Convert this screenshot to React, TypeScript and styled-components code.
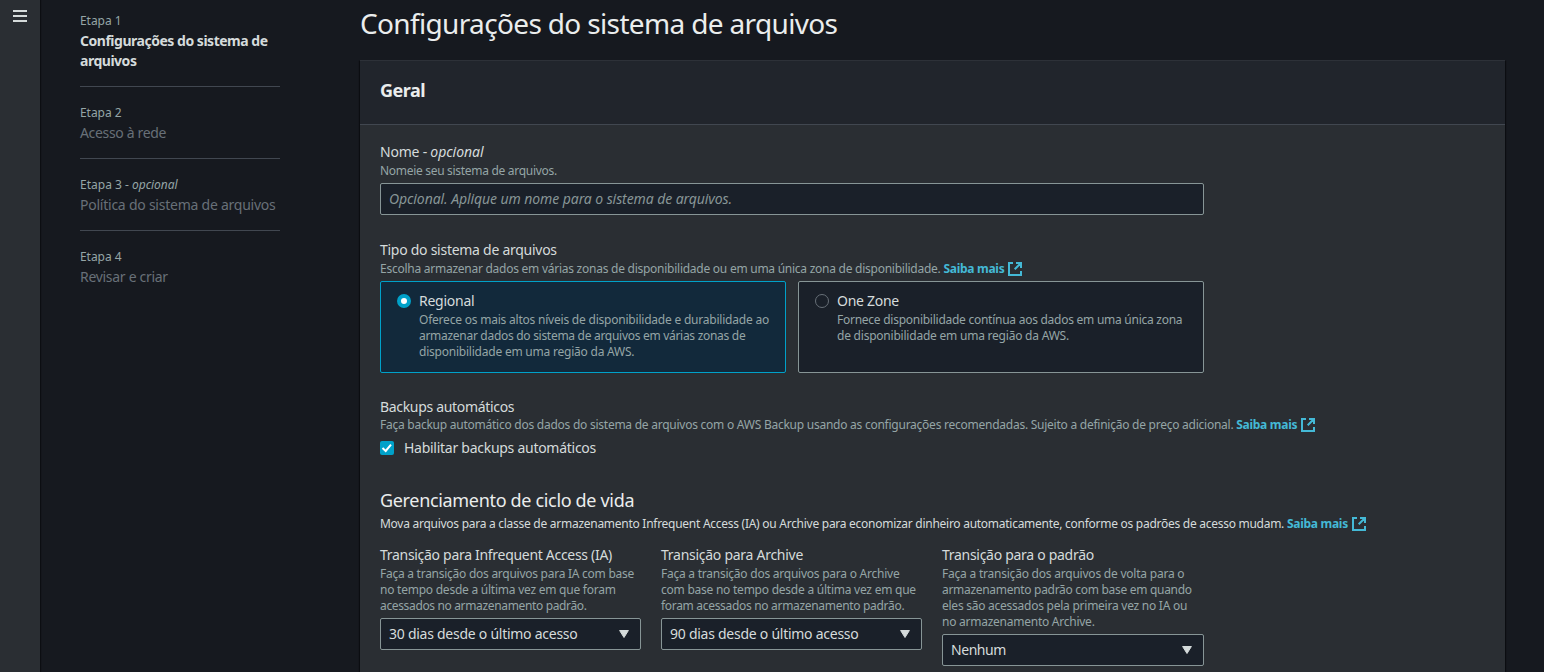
import React from 'react';
import styled, { createGlobalStyle } from 'styled-components';

const GlobalStyle = createGlobalStyle`
  * { box-sizing: border-box; }
  html, body, #root { height: 100%; }
  body {
    margin: 0;
    overflow: hidden;
    background: #16191f;
    color: #d5dbdb;
    font-family: 'Noto Sans', 'Open Sans', sans-serif;
    font-size: 14px;
    line-height: 20px;
  }
  h1, h2, h3, p, ol { margin: 0; padding: 0; }
`;

type Tracked = { $track?: number };

const Shell = styled.div`
  display: flex;
  height: 100vh;
  overflow: hidden;
`;

const NavRail = styled.nav`
  flex: none;
  width: 40px;
  padding: 10px 13px;
  background: #2a2e33;
  box-shadow: 1px 0 1px #0c0e12;
`;

const MenuButton = styled.button`
  display: flex;
  flex-direction: column;
  gap: 3px;
  width: 14px;
  padding: 0;
  border: 0;
  background: none;
`;

const MenuBar = styled.span`
  height: 2px;
  background: #d5dbdb;
`;

const Steps = styled.ol`
  flex: none;
  width: 200px;
  margin: 11px 0 0 40px;
  list-style: none;
`;

const Step = styled.li`
  padding-bottom: 15px;
  & + & {
    padding-top: 16px;
    border-top: 1px solid #414750;
  }
`;

const StepNumber = styled.div<Tracked>`
  font-size: 12px;
  color: #95a5a6;
  letter-spacing: ${(p) => p.$track ?? -0.05}px;
`;

const StepTitle = styled.div<{ $active?: boolean } & Tracked>`
  color: ${(p) => (p.$active ? '#d5dbdb' : '#687078')};
  font-weight: ${(p) => (p.$active ? 700 : 400)};
  letter-spacing: ${(p) => p.$track ?? -0.3}px;
`;

const Main = styled.main`
  flex: none;
  width: 1145px;
  margin-left: 80px;
  padding-top: 5px;
`;

const PageTitle = styled.h1`
  margin-bottom: 19px;
  font-size: 28px;
  line-height: 36px;
  font-weight: 400;
  letter-spacing: -0.65px;
  color: #eaeded;
`;

const Panel = styled.section`
  height: 700px;
  background: #2a2e33;
  box-shadow: 0 1px 1px #0c0e12, 1px 1px 1px #0c0e12, -1px 1px 1px #0c0e12;
`;

const PanelHeader = styled.header`
  height: 65px;
  padding: 18px 20px;
  border-top: 1px solid #2d3138;
  border-bottom: 1px solid #414750;
  background: #21252c;
`;

const PanelTitle = styled.h2`
  font-size: 18px;
  line-height: 22px;
  letter-spacing: -0.52px;
  color: #eaeded;
`;

const PanelBody = styled.div`
  padding: 16px 20px;
`;

const Field = styled.div<{ $gap?: number }>`
  width: 824px;
  margin-bottom: ${(p) => p.$gap ?? 24}px;
`;

const Label = styled.div<{ $tight?: boolean } & Tracked>`
  line-height: 22px;
  margin-bottom: ${(p) => (p.$tight ? -1 : 0)}px;
  letter-spacing: ${(p) => p.$track ?? -0.27}px;
  white-space: nowrap;
`;

const Hint = styled.p<{ $bright?: boolean } & Tracked>`
  font-size: 12px;
  line-height: 16px;
  color: ${(p) => (p.$bright ? '#d5dbdb' : '#95a5a6')};
  letter-spacing: ${(p) => p.$track ?? -0.26}px;
  white-space: nowrap;
`;

const Line = styled.span<Tracked>`
  display: block;
  letter-spacing: ${(p) => p.$track ?? -0.26}px;
`;

const Emphasis = styled.em`
  letter-spacing: -0.04px;
`;

const TextInput = styled.input`
  display: block;
  width: 100%;
  height: 32px;
  margin-top: 4px;
  padding: 0 8px 2px;
  border: 1px solid #879596;
  border-radius: 2px;
  background: #1a2029;
  font: inherit;
  color: #d5dbdb;
  &::placeholder {
    color: #879596;
    font-style: italic;
    letter-spacing: -0.08px;
    opacity: 1;
  }
`;

const Link = styled.a`
  display: inline-flex;
  align-items: center;
  gap: 4px;
  height: 16px;
  vertical-align: top;
  font-weight: 700;
  letter-spacing: -0.28px;
  color: #44b9d6;
`;

const Tiles = styled.div`
  display: flex;
  gap: 12px;
  margin-top: 4px;
`;

const Tile = styled.label<{ $selected?: boolean }>`
  display: flex;
  flex: 1;
  gap: 8px;
  height: 92px;
  padding: 8px 16px;
  border: 1px solid ${(p) => (p.$selected ? '#00a1c9' : '#879596')};
  border-radius: 2px;
  background: ${(p) => (p.$selected ? '#12293b' : '#1a2029')};
`;

const Radio = styled.span<{ $selected?: boolean }>`
  flex: none;
  width: 14px;
  height: 14px;
  margin-top: 4px;
  border: ${(p) => (p.$selected ? '4px solid #00a1c9' : '1px solid #687078')};
  border-radius: 50%;
  background: ${(p) => (p.$selected ? '#fff' : '#1a2029')};
`;

const CheckRow = styled.label`
  display: flex;
  align-items: center;
  gap: 10px;
  height: 22px;
  margin-top: 4px;
`;

const SectionTitle = styled.h3`
  margin-bottom: 5px;
  font-size: 18px;
  line-height: 22px;
  font-weight: 400;
  letter-spacing: -0.33px;
  color: #eaeded;
`;

const Columns = styled.div`
  display: grid;
  grid-template-columns: 261px 261px 262px;
  gap: 20px;
  margin-top: 12px;
`;

const Select = styled.div<Tracked>`
  display: flex;
  align-items: center;
  justify-content: space-between;
  height: 32px;
  margin-top: 4px;
  padding: 0 11px 0 8px;
  border: 1px solid #879596;
  border-radius: 2px;
  background: #1a2029;
  letter-spacing: ${(p) => p.$track ?? -0.26}px;
`;

const ExternalIcon = () => (
  <svg width="14" height="14" viewBox="0 0 14 14" fill="none" stroke="#44b9d6" strokeWidth="2">
    <path d="M5 1H1v12h12V9M8 1h5v5M13 1L6.7 7.3" />
  </svg>
);

const CheckIcon = () => (
  <svg width="14" height="14" viewBox="0 0 14 14">
    <rect width="14" height="14" rx="2" fill="#00a1c9" />
    <path d="M2.5 7l3.2 3L11 3.7" fill="none" stroke="#fff" strokeWidth="2" />
  </svg>
);

const CaretIcon = () => (
  <svg width="10" height="8" viewBox="0 0 10 8">
    <path d="M.6.5h8.8L5 7.5z" fill="#d5dbdb" stroke="#d5dbdb" strokeLinejoin="round" />
  </svg>
);

const LearnMore = () => (
  <Link>
    Saiba mais
    <ExternalIcon />
  </Link>
);

export default function App() {
  return (
    <Shell>
      <GlobalStyle />
      <NavRail>
        <MenuButton aria-label="Menu">
          <MenuBar />
          <MenuBar />
          <MenuBar />
        </MenuButton>
      </NavRail>
      <Steps>
        <Step>
          <StepNumber>Etapa 1</StepNumber>
          <StepTitle $active $track={-0.48}>
            Configurações do sistema de arquivos
          </StepTitle>
        </Step>
        <Step>
          <StepNumber>Etapa 2</StepNumber>
          <StepTitle $track={-0.34}>Acesso à rede</StepTitle>
        </Step>
        <Step>
          <StepNumber $track={0.01}>
            Etapa 3 - <Emphasis>opcional</Emphasis>
          </StepNumber>
          <StepTitle $track={-0.24}>Política do sistema de arquivos</StepTitle>
        </Step>
        <Step>
          <StepNumber>Etapa 4</StepNumber>
          <StepTitle>Revisar e criar</StepTitle>
        </Step>
      </Steps>
      <Main>
        <PageTitle>Configurações do sistema de arquivos</PageTitle>
        <Panel>
          <PanelHeader>
            <PanelTitle>Geral</PanelTitle>
          </PanelHeader>
          <PanelBody>
            <Field>
              <Label $track={-0.22}>
                Nome - <Emphasis>opcional</Emphasis>
              </Label>
              <Hint $track={-0.3}>Nomeie seu sistema de arquivos.</Hint>
              <TextInput placeholder="Opcional. Aplique um nome para o sistema de arquivos." />
            </Field>
            <Field $gap={23}>
              <Label>Tipo do sistema de arquivos</Label>
              <Hint $track={-0.255}>
                Escolha armazenar dados em várias zonas de disponibilidade ou em uma única zona de
                disponibilidade. <LearnMore />
              </Hint>
              <Tiles>
                <Tile $selected>
                  <Radio $selected />
                  <div>
                    <Label $track={-0.24}>Regional</Label>
                    <Hint>
                      <Line $track={-0.215}>
                        Oferece os mais altos níveis de disponibilidade e durabilidade ao
                      </Line>
                      <Line $track={-0.29}>
                        armazenar dados do sistema de arquivos em várias zonas de
                      </Line>
                      <Line $track={-0.22}>disponibilidade em uma região da AWS.</Line>
                    </Hint>
                  </div>
                </Tile>
                <Tile>
                  <Radio />
                  <div>
                    <Label>One Zone</Label>
                    <Hint>
                      <Line>Fornece disponibilidade contínua aos dados em uma única zona</Line>
                      <Line $track={-0.22}>de disponibilidade em uma região da AWS.</Line>
                    </Hint>
                  </div>
                </Tile>
              </Tiles>
            </Field>
            <Field $gap={30}>
              <Label $tight $track={-0.32}>
                Backups automáticos
              </Label>
              <Hint $track={-0.249}>
                Faça backup automático dos dados do sistema de arquivos com o AWS Backup usando as
                configurações recomendadas. Sujeito a definição de preço adicional. <LearnMore />
              </Hint>
              <CheckRow>
                <CheckIcon />
                <Label>Habilitar backups automáticos</Label>
              </CheckRow>
            </Field>
            <SectionTitle>Gerenciamento de ciclo de vida</SectionTitle>
            <Hint $bright $track={-0.27}>
              Mova arquivos para a classe de armazenamento Infrequent Access (IA) ou Archive para
              economizar dinheiro automaticamente, conforme os padrões de acesso mudam. <LearnMore />
            </Hint>
            <Columns>
              <div>
                <Label $track={-0.3}>Transição para Infrequent Access (IA)</Label>
                <Hint>
                  <Line>Faça a transição dos arquivos para IA com base</Line>
                  <Line $track={-0.24}>no tempo desde a última vez em que foram</Line>
                  <Line $track={-0.35}>acessados no armazenamento padrão.</Line>
                </Hint>
                <Select>
                  30 dias desde o último acesso
                  <CaretIcon />
                </Select>
              </div>
              <div>
                <Label>Transição para Archive</Label>
                <Hint>
                  <Line $track={-0.24}>Faça a transição dos arquivos para o Archive</Line>
                  <Line $track={-0.24}>com base no tempo desde a última vez em que</Line>
                  <Line $track={-0.31}>foram acessados no armazenamento padrão.</Line>
                </Hint>
                <Select>
                  90 dias desde o último acesso
                  <CaretIcon />
                </Select>
              </div>
              <div>
                <Label $track={-0.29}>Transição para o padrão</Label>
                <Hint>
                  <Line $track={-0.22}>Faça a transição dos arquivos de volta para o</Line>
                  <Line $track={-0.3}>armazenamento padrão com base em quando</Line>
                  <Line $track={-0.25}>eles são acessados pela primeira vez no IA ou</Line>
                  <Line $track={-0.25}>no armazenamento Archive.</Line>
                </Hint>
                <Select $track={-0.45}>
                  Nenhum
                  <CaretIcon />
                </Select>
              </div>
            </Columns>
          </PanelBody>
        </Panel>
      </Main>
    </Shell>
  );
}
